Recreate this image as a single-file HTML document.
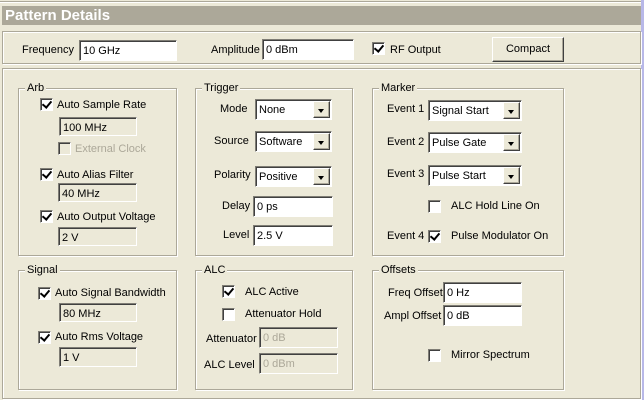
<!DOCTYPE html>
<html><head><style>
*{box-sizing:border-box;margin:0;padding:0}
body{width:644px;height:400px;background:#ece9d8;position:relative;overflow:hidden;font-family:"Liberation Sans",sans-serif;font-size:11px;color:#000}
.a{position:absolute;white-space:nowrap}
.etch{position:absolute;border:1px solid #aca899;box-shadow:1px 1px 0 #fff inset,1px 1px 0 #fff}
.gl{position:absolute;background:#ece9d8;padding:0 2px;line-height:12px}
.in{position:absolute;background:#fff;border:1px solid;border-color:#7f7d75 #fff #fff #7f7d75;box-shadow:inset 1px 1px 0 #404040;padding:3px 0 0 3px;line-height:14px}
.ro{background:#ece9d8}
.dis{color:#aca899;background:#ece9d8}
.cb{position:absolute;width:13px;height:13px;background:#fff;border:1px solid;border-color:#7f7d75 #fff #fff #7f7d75;box-shadow:inset 1px 1px 0 #404040}
.cb.c::after{content:"";position:absolute;left:3px;top:0px;width:4px;height:7px;border:solid #000;border-width:0 2px 2px 0;transform:rotate(40deg)}
.cb.d{background:#ece9d8}
.sel .arr{position:absolute;right:1px;top:1px;width:17px;bottom:1px;background:#ece9d8;border:1px solid;border-color:#fff #404040 #404040 #fff;box-shadow:inset -1px -1px 0 #aca899}
.sel .arr::after{content:"";position:absolute;left:4px;top:7px;border:3.5px solid transparent;border-top:4px solid #000;border-bottom:0}
.btn{position:absolute;background:#ece9d8;border:1px solid;border-color:#fff #404040 #404040 #fff;box-shadow:inset -1px -1px 0 #aca899;text-align:center}
</style></head><body>
<div class="a" style="left:0;top:1px;width:644px;height:1px;background:#aca899"></div>
<div class="a" style="left:0;top:2px;width:644px;height:1px;background:#fff"></div>
<div class="a" style="left:2px;top:6px;width:639px;height:19px;background:#aca899;color:#fff;font-weight:bold;font-size:15px;line-height:19px;padding-left:3px">Pattern Details</div>
<div class="a" style="left:641px;top:0;width:3px;height:400px;background:#b8b8e8"></div>

<div class="etch" style="left:2px;top:31px;width:639px;height:33px"></div>
<div class="a" style="left:22px;top:44px">Frequency</div>
<div class="in" style="left:79px;top:40px;width:98px;height:21px">10 GHz</div>
<div class="a" style="left:211px;top:44px">Amplitude</div>
<div class="in" style="left:262px;top:39px;width:92px;height:21px">0 dBm</div>
<div class="cb c" style="left:372px;top:42px"></div>
<div class="a" style="left:390px;top:44px">RF Output</div>
<div class="btn" style="left:492px;top:37px;width:72px;height:25px;line-height:22px">Compact</div>

<div class="etch" style="left:2px;top:68px;width:639px;height:331px"></div>

<div class="etch" style="left:18px;top:88px;width:159px;height:168px"></div><div class="gl" style="left:25px;top:82px">Arb</div>
<div class="etch" style="left:195px;top:88px;width:158px;height:168px"></div><div class="gl" style="left:202px;top:82px">Trigger</div>
<div class="etch" style="left:372px;top:88px;width:192px;height:168px"></div><div class="gl" style="left:379px;top:82px">Marker</div>
<div class="etch" style="left:18px;top:270px;width:159px;height:120px"></div><div class="gl" style="left:25px;top:264px">Signal</div>
<div class="etch" style="left:195px;top:270px;width:158px;height:120px"></div><div class="gl" style="left:202px;top:264px">ALC</div>
<div class="etch" style="left:372px;top:270px;width:192px;height:120px"></div><div class="gl" style="left:379px;top:264px">Offsets</div>

<!-- Arb -->
<div class="cb c" style="left:40px;top:98px"></div><div class="a" style="left:57px;top:99px">Auto Sample Rate</div>
<div class="in ro" style="left:59px;top:117px;width:78px;height:19px">100 MHz</div>
<div class="cb d" style="left:58px;top:142px"></div><div class="a" style="left:75px;top:143px;color:#aca899">External Clock</div>
<div class="cb c" style="left:40px;top:168px"></div><div class="a" style="left:57px;top:169px">Auto Alias Filter</div>
<div class="in ro" style="left:58px;top:183px;width:79px;height:19px">40 MHz</div>
<div class="cb c" style="left:40px;top:210px"></div><div class="a" style="left:57px;top:211px">Auto Output Voltage</div>
<div class="in ro" style="left:58px;top:227px;width:79px;height:19px">2 V</div>

<!-- Trigger -->
<div class="a" style="left:220px;top:103px">Mode</div>
<div class="in sel" style="left:255px;top:99px;width:77px;height:21px">None<span class="arr"></span></div>
<div class="a" style="left:214px;top:135px">Source</div>
<div class="in sel" style="left:255px;top:131px;width:77px;height:21px">Software<span class="arr"></span></div>
<div class="a" style="left:214px;top:169px">Polarity</div>
<div class="in sel" style="left:255px;top:166px;width:77px;height:21px">Positive<span class="arr"></span></div>
<div class="a" style="left:222px;top:200px">Delay</div>
<div class="in" style="left:253px;top:196px;width:80px;height:21px">0 ps</div>
<div class="a" style="left:223px;top:229px">Level</div>
<div class="in" style="left:253px;top:225px;width:80px;height:21px">2.5 V</div>

<!-- Marker -->
<div class="a" style="left:387px;top:103px">Event 1</div>
<div class="in sel" style="left:428px;top:100px;width:94px;height:21px">Signal Start<span class="arr"></span></div>
<div class="a" style="left:387px;top:136px">Event 2</div>
<div class="in sel" style="left:428px;top:132px;width:94px;height:21px">Pulse Gate<span class="arr"></span></div>
<div class="a" style="left:387px;top:168px">Event 3</div>
<div class="in sel" style="left:428px;top:165px;width:94px;height:21px">Pulse Start<span class="arr"></span></div>
<div class="cb" style="left:428px;top:200px"></div><div class="a" style="left:451px;top:200px">ALC Hold Line On</div>
<div class="a" style="left:387px;top:230px">Event 4</div>
<div class="cb c" style="left:428px;top:230px"></div><div class="a" style="left:451px;top:230px">Pulse Modulator On</div>

<!-- Signal -->
<div class="cb c" style="left:38px;top:287px"></div><div class="a" style="left:55px;top:287px">Auto Signal Bandwidth</div>
<div class="in ro" style="left:59px;top:303px;width:78px;height:19px">80 MHz</div>
<div class="cb c" style="left:38px;top:331px"></div><div class="a" style="left:55px;top:331px">Auto Rms Voltage</div>
<div class="in ro" style="left:59px;top:347px;width:78px;height:20px">1 V</div>

<!-- ALC -->
<div class="cb c" style="left:222px;top:285px"></div><div class="a" style="left:245px;top:286px">ALC Active</div>
<div class="cb" style="left:222px;top:308px"></div><div class="a" style="left:245px;top:308px">Attenuator Hold</div>
<div class="a" style="left:206px;top:333px">Attenuator</div>
<div class="in dis" style="left:259px;top:327px;width:79px;height:21px">0 dB</div>
<div class="a" style="left:204px;top:359px">ALC Level</div>
<div class="in dis" style="left:259px;top:353px;width:79px;height:21px">0 dBm</div>

<!-- Offsets -->
<div class="a" style="left:388px;top:287px">Freq Offset</div>
<div class="in" style="left:443px;top:282px;width:79px;height:21px">0 Hz</div>
<div class="a" style="left:384px;top:310px">Ampl Offset</div>
<div class="in" style="left:443px;top:305px;width:79px;height:21px">0 dB</div>
<div class="cb" style="left:428px;top:349px"></div><div class="a" style="left:451px;top:349px">Mirror Spectrum</div>
</body></html>
